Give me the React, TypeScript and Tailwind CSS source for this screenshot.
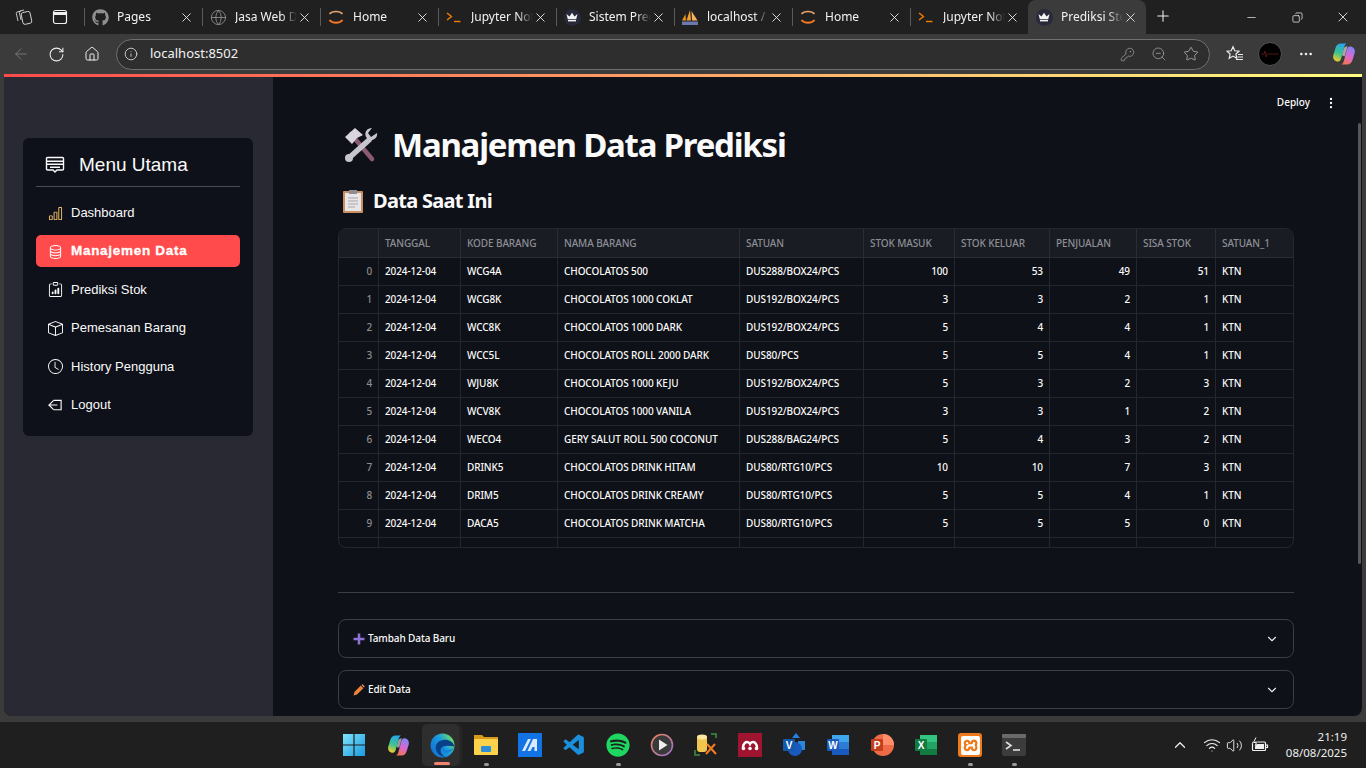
import { ArrowLeft, ChevronDown, ChevronUp, Copy, EllipsisVertical, Info, KeyRound, Minus, MoreHorizontal, Plus, RotateCw, Home, Star, X, ZoomOut, Globe, Wifi, Volume2 } from "lucide-react";
import { BsBarChart, BsBox, BsClipboardData, BsClock, BsDatabase } from "react-icons/bs";
import { FaGithub, FaSpotify } from "react-icons/fa";
import { VscVscode } from "react-icons/vsc";
import { SiXampp } from "react-icons/si";

const columns = ["TANGGAL", "KODE BARANG", "NAMA BARANG", "SATUAN", "STOK MASUK", "STOK KELUAR", "PENJUALAN", "SISA STOK", "SATUAN_1"];

const rows = [
  ["WCG4A", "CHOCOLATOS 500", "DUS288/BOX24/PCS", 100, 53, 49, 51],
  ["WCG8K", "CHOCOLATOS 1000 COKLAT", "DUS192/BOX24/PCS", 3, 3, 2, 1],
  ["WCC8K", "CHOCOLATOS 1000 DARK", "DUS192/BOX24/PCS", 5, 4, 4, 1],
  ["WCC5L", "CHOCOLATOS ROLL 2000 DARK", "DUS80/PCS", 5, 5, 4, 1],
  ["WJU8K", "CHOCOLATOS 1000 KEJU", "DUS192/BOX24/PCS", 5, 3, 2, 3],
  ["WCV8K", "CHOCOLATOS 1000 VANILA", "DUS192/BOX24/PCS", 3, 3, 1, 2],
  ["WECO4", "GERY SALUT ROLL 500 COCONUT", "DUS288/BAG24/PCS", 5, 4, 3, 2],
  ["DRINK5", "CHOCOLATOS DRINK HITAM", "DUS80/RTG10/PCS", 10, 10, 7, 3],
  ["DRIM5", "CHOCOLATOS DRINK CREAMY", "DUS80/RTG10/PCS", 5, 5, 4, 1],
  ["DACA5", "CHOCOLATOS DRINK MATCHA", "DUS80/RTG10/PCS", 5, 5, 5, 0],
];

const gridCols = "grid grid-cols-[40px_82px_97px_182px_124px_91px_95px_87px_79px_77px]";
const cell = "flex h-7 items-center overflow-hidden whitespace-nowrap border-r border-b border-[#24272e] px-[6px]";

function JupyterIcon() {
  return (
    <svg width="16" height="16" viewBox="0 0 16 16" fill="none" strokeWidth="1.5">
      <path d="M1.5 5 C4 1.6 12 1.6 14.5 5" stroke="#e9a36f" />
      <path d="M1.5 11 C4 14.6 12 14.6 14.5 11" stroke="#f37726" strokeWidth="2" />
    </svg>
  );
}

function TerminalIcon() {
  return (
    <svg width="16" height="16" viewBox="0 0 16 16" fill="none" stroke="#f57c00" strokeWidth="1.4">
      <path d="M1 4 L5.5 7.5 L1 11" />
      <path d="M8 12.5 H14.5" />
    </svg>
  );
}

function CrownIcon() {
  return (
    <span className="flex h-[17px] w-[17px] items-center justify-center rounded-full bg-[#28293a]">
      <svg width="12" height="10" viewBox="0 0 12 10" fill="#f4f4f4">
        <path d="M0.5 2 L3.5 4.5 L6 0.8 L8.5 4.5 L11.5 2 L10.2 7.2 H1.8 Z" />
        <rect x="2" y="8" width="8" height="1.4" />
      </svg>
    </span>
  );
}

function SailIcon() {
  return (
    <svg width="18" height="17" viewBox="0 0 18 17">
      <path d="M1 11.5 L4.5 5 L5 11.5 Z" fill="#e8921f" />
      <path d="M5.5 11.5 L9 1 L10 11.5 Z" fill="#f0a030" />
      <path d="M10.5 2 L16.5 11.5 L11 11.5 Z" fill="#f2b25e" />
      <rect x="1" y="12.5" width="16" height="3.5" fill="#6c78af" />
    </svg>
  );
}

function CopilotIcon({ size }: { size: number }) {
  return (
    <svg width={size} height={size} viewBox="0 0 24 24">
      <defs>
        <linearGradient id={`cpa${size}`} x1="0.6" y1="0" x2="0.3" y2="1">
          <stop offset="0" stopColor="#27a5ee" />
          <stop offset="0.55" stopColor="#3bc48b" />
          <stop offset="1" stopColor="#f7ce2a" />
        </linearGradient>
        <linearGradient id={`cpb${size}`} x1="0.7" y1="0" x2="0.3" y2="1">
          <stop offset="0" stopColor="#7f86f4" />
          <stop offset="0.5" stopColor="#d768d6" />
          <stop offset="1" stopColor="#f5744f" />
        </linearGradient>
      </defs>
      <path d="M9 1.5 H14.5 C13 2.5 12.5 3.8 12 5.5 L9.5 15 C9 17.5 8 19.5 6 19.5 C3 19.5 0.6 17 1.2 13.5 L3.5 6 C4.4 3.2 6 1.5 9 1.5 Z" fill={`url(#cpa${size})`} />
      <path d="M15 22.5 H9.5 C11 21.5 11.5 20.2 12 18.5 L14.5 9 C15 6.5 16 4.5 18 4.5 C21 4.5 23.4 7 22.8 10.5 L20.5 18 C19.6 20.8 18 22.5 15 22.5 Z" fill={`url(#cpb${size})`} />
      <path d="M12 6 C13 5 14.5 4 15.5 4.5 C15 5.5 14.7 7.5 14.2 9 L12.8 14 C12 14.5 10.5 14 10 13 Z" fill="#fff" fillOpacity="0.55" />
    </svg>
  );
}

function EdgeIcon({ size }: { size: number }) {
  return (
    <svg width={size} height={size} viewBox="0 0 24 24">
      <defs>
        <linearGradient id={`edge${size}`} x1="0.1" y1="0.7" x2="0.9" y2="0.2">
          <stop offset="0" stopColor="#1478d0" />
          <stop offset="0.55" stopColor="#1b9de0" />
          <stop offset="1" stopColor="#6bdc66" />
        </linearGradient>
      </defs>
      <circle cx="12" cy="12" r="11.5" fill={`url(#edge${size})`} />
      <path d="M23.4 13 C22.5 8.5 18.5 6.5 14.5 6.5 C9 6.5 5.5 10 5.5 14 C5.5 18.5 9.5 23 15 23 C11 21 9.5 18 10.5 15 C11.5 12.5 16 11.5 23.4 13 Z" fill="#0a3f88" />
      <path d="M11.5 15.5 C11.5 18 14.5 19.5 17 19 C19.5 18.5 22 16.5 23 14 C20 16.5 16 17 14 15.5 C13 14.8 13 13.5 14 13 C12.5 13 11.5 14 11.5 15.5 Z" fill="#1282d8" />
    </svg>
  );
}

function OfficeIcon({ letter, dark, mid, light }: { letter: string; dark: string; mid: string; light: string }) {
  return (
    <svg width="24" height="24" viewBox="0 0 24 24">
      <rect x="6" y="2" width="17" height="7" fill={light} />
      <rect x="6" y="9" width="17" height="7" fill={mid} />
      <rect x="6" y="16" width="17" height="6" fill={dark} />
      <rect x="1" y="6" width="12" height="12" rx="1" fill={dark} />
      <text x="7" y="15.5" textAnchor="middle" fontSize="10" fontWeight="700" fill="#fff" fontFamily="Liberation Sans, sans-serif">{letter}</text>
    </svg>
  );
}

const taskbarIcons = [
  {
    dot: false,
    node: (
      <svg width="24" height="24" viewBox="0 0 24 24">
        <defs>
          <linearGradient id="win" x1="0" y1="0" x2="1" y2="1">
            <stop offset="0" stopColor="#7fe3fb" />
            <stop offset="1" stopColor="#1a9be0" />
          </linearGradient>
        </defs>
        <path d="M1 1 H11.4 V11.4 H1 Z M12.6 1 H23 V11.4 H12.6 Z M1 12.6 H11.4 V23 H1 Z M12.6 12.6 H23 V23 H12.6 Z" fill="url(#win)" />
      </svg>
    ),
  },
  { dot: false, node: <CopilotIcon size={23} /> },
  { dot: false, active: true, node: <EdgeIcon size={25} /> },
  {
    dot: true,
    node: (
      <svg width="26" height="24" viewBox="0 0 26 24">
        <path d="M1 2 H9 L11 4 H25 V9 H1 Z" fill="#d69a1c" />
        <rect x="1" y="6" width="24" height="16" rx="1" fill="#fcd24d" />
        <rect x="8" y="13" width="10" height="6" rx="1" fill="#2b8fd8" />
      </svg>
    ),
  },
  {
    dot: false,
    node: (
      <svg width="24" height="24" viewBox="0 0 24 24">
        <rect width="24" height="24" fill="#1173e6" />
        <path d="M4 18 L10 6 H13 L7 18 Z M9.5 18 L15 6 H19 V18 H16.5 V14 H14.5 L12.5 18 Z" fill="#dbeafe" />
      </svg>
    ),
  },
  { dot: false, node: <VscVscode size={25} color="#1a8fdc" /> },
  { dot: true, node: <FaSpotify size={24} color="#1ed760" /> },
  {
    dot: false,
    node: (
      <svg width="24" height="24" viewBox="0 0 24 24">
        <defs>
          <linearGradient id="play" x1="0" y1="0" x2="1" y2="1">
            <stop offset="0" stopColor="#e7845a" />
            <stop offset="1" stopColor="#9a6fd0" />
          </linearGradient>
        </defs>
        <circle cx="12" cy="12" r="10.5" fill="#3a3a3a" stroke="url(#play)" strokeWidth="1.6" />
        <path d="M9 6.5 L17.5 12 L9 17.5 Z" fill="#eee" />
      </svg>
    ),
  },
  {
    dot: false,
    node: (
      <svg width="24" height="24" viewBox="0 0 24 24">
        <path d="M1 17 V22 H6 M17 1 H22 V5" fill="none" stroke="#3f9142" strokeWidth="1.5" />
        <rect x="3" y="2" width="10" height="17" rx="3" fill="#f0c64c" />
        <ellipse cx="8" cy="4" rx="5" ry="2.5" fill="#fbe6a2" />
        <path d="M12 21 L21 11 M13 11 L22 21" stroke="#f57c1f" strokeWidth="2" />
      </svg>
    ),
  },
  {
    dot: false,
    node: (
      <svg width="24" height="24" viewBox="0 0 24 24">
        <rect width="24" height="24" fill="#9f1530" />
        <path d="M5 15 C5 10 8 9 9 9 C10.5 9 11.5 10 12 11 C12.5 10 13.5 9 15 9 C16 9 19 10 19 15" fill="none" stroke="#fff" strokeWidth="2.4" />
        <circle cx="5.5" cy="15.5" r="1.8" fill="#fff" />
        <circle cx="12" cy="15.5" r="1.8" fill="#fff" />
        <circle cx="18.5" cy="15.5" r="1.8" fill="#fff" />
      </svg>
    ),
  },
  {
    dot: false,
    node: (
      <svg width="24" height="24" viewBox="0 0 24 24">
        <path d="M14 0 L18 5 H10 Z" fill="#2a7de1" />
        <rect x="16" y="8" width="7" height="9" fill="#2b88d8" />
        <circle cx="13" cy="16" r="7" fill="#185abd" />
        <rect x="1" y="6" width="12" height="12" rx="1" fill="#125aac" />
        <text x="7" y="15.5" textAnchor="middle" fontSize="10" fontWeight="700" fill="#fff" fontFamily="Liberation Sans, sans-serif">V</text>
      </svg>
    ),
  },
  { dot: false, node: <OfficeIcon letter="W" dark="#185abd" mid="#2b7cd3" light="#41a5ee" /> },
  {
    dot: false,
    node: (
      <svg width="24" height="24" viewBox="0 0 24 24">
        <circle cx="13" cy="12" r="11" fill="#ed6c47" />
        <path d="M13 1 A11 11 0 0 1 24 12 H13 Z" fill="#ff8f6b" />
        <rect x="1" y="6" width="12" height="12" rx="1" fill="#c43e1c" />
        <text x="7" y="15.5" textAnchor="middle" fontSize="10" fontWeight="700" fill="#fff" fontFamily="Liberation Sans, sans-serif">P</text>
      </svg>
    ),
  },
  { dot: false, node: <OfficeIcon letter="X" dark="#107c41" mid="#21a366" light="#33c481" /> },
  {
    dot: true,
    node: (
      <span className="flex h-6 w-6 items-center justify-center rounded-[3px] bg-[#ee7a1b]">
        <SiXampp size={19} color="#fff" />
      </span>
    ),
  },
  {
    dot: true,
    node: (
      <svg width="24" height="24" viewBox="0 0 24 24">
        <rect y="1" width="24" height="22" rx="2" fill="#3c3c3c" />
        <rect y="1" width="24" height="4" rx="1" fill="#6a6a6a" />
        <path d="M4 9 L9 12.5 L4 16" fill="none" stroke="#ddd" strokeWidth="1.6" />
        <path d="M11 17 H18" stroke="#ddd" strokeWidth="1.6" />
      </svg>
    ),
  },
];

function Tab({ icon, title, active }: { icon: React.ReactNode; title: string; active?: boolean }) {
  return (
    <div className={`relative flex h-[34px] w-[118px] shrink-0 items-center pl-[7px] pr-[8px] ${active ? "rounded-t-lg bg-[#3b3b3b]" : ""}`}>
      {!active && <span className="absolute left-0 top-[8px] h-[18px] w-px bg-[#5a5a5a]" />}
      <span className="flex w-[18px] shrink-0 justify-center">{icon}</span>
      <span className="ml-[8px] w-[62px] overflow-hidden whitespace-nowrap text-[12px] text-[#f2f2f2] [mask-image:linear-gradient(90deg,#000_75%,transparent_100%)]">{title}</span>
      <X size={15} strokeWidth={1.4} className="ml-auto text-[#f0f0f0]" />
    </div>
  );
}

function LogoutIcon() {
  return (
    <svg width="16" height="16" viewBox="0 0 16 16" fill="none" stroke="currentColor" strokeWidth="1.2">
      <path d="M6 3 H14 V13 H6" />
      <path d="M6 3 L1 8 H10 M1 8 L6 13" />
    </svg>
  );
}

const menu = [
  { label: "Dashboard", icon: <BsBarChart size={15} color="#f5c46b" /> },
  { label: "Manajemen Data", icon: <BsDatabase size={15} />, active: true },
  { label: "Prediksi Stok", icon: <BsClipboardData size={15} /> },
  { label: "Pemesanan Barang", icon: <BsBox size={15} /> },
  { label: "History Pengguna", icon: <BsClock size={15} /> },
  { label: "Logout", icon: <LogoutIcon /> },
];

function Expander({ icon, label }: { icon: React.ReactNode; label: string }) {
  return (
    <div className="flex h-[39px] items-center justify-between rounded-lg border border-[#3b3e45] pl-[14px] pr-[14px]">
      <div className="flex items-center gap-[3px] text-[10px] font-medium tracking-[-0.1px] text-[#fafafa]">
        {icon}
        <span>{label}</span>
      </div>
      <ChevronDown size={14} strokeWidth={2} className="text-[#e8e8e8]" />
    </div>
  );
}

export default function App() {
  return (
    <div className="flex h-[768px] w-[1366px] flex-col overflow-hidden bg-[#3b3b3b] font-['Noto_Sans',sans-serif]">
      <div className="flex h-[34px] shrink-0 bg-[#202020]">
        <div className="flex w-[84px] shrink-0 items-center gap-[19px] pl-[15px]">
          <svg width="18" height="18" viewBox="0 0 18 18" fill="none" stroke="#d8d8d8" strokeWidth="0.9">
            <path d="M6 3 L2 4 C1.4 4.2 1.2 4.8 1.3 5.3 L3 13" />
            <path d="M9 2 L5 3 C4.4 3.2 4.2 3.8 4.3 4.3 L6 12" />
            <rect x="7" y="4" width="9" height="12" rx="2" transform="rotate(-12 11 10)" />
          </svg>
          <svg width="16" height="16" viewBox="0 0 16 16" fill="none" stroke="#f0f0f0" strokeWidth="1.2">
            <rect x="1.5" y="1.5" width="13" height="13" rx="2" />
            <path d="M1.5 4.5 H14.5" strokeWidth="3" />
          </svg>
        </div>
        <Tab icon={<FaGithub size={17} color="#8f8f8f" />} title="Pages" />
        <Tab icon={<Globe size={17} strokeWidth={1.1} color="#9a9a9a" />} title="Jasa Web Desain" />
        <Tab icon={<JupyterIcon />} title="Home" />
        <Tab icon={<TerminalIcon />} title="Jupyter Notebook" />
        <Tab icon={<CrownIcon />} title="Sistem Prediksi" />
        <Tab icon={<SailIcon />} title="localhost / phpMy" />
        <Tab icon={<JupyterIcon />} title="Home" />
        <Tab icon={<TerminalIcon />} title="Jupyter Notebook" />
        <Tab icon={<CrownIcon />} title="Prediksi Stok" active />
        <Plus size={18} strokeWidth={1.4} className="ml-[8px] mt-[7px] text-[#f0f0f0]" />
        <div className="ml-auto flex items-center">
          <span className="flex w-[46px] justify-center"><Minus size={13} strokeWidth={1.3} className="text-[#f0f0f0]" /></span>
          <span className="flex w-[46px] justify-center"><Copy size={11} strokeWidth={1.6} className="-scale-x-100 text-[#f0f0f0]" /></span>
          <span className="flex w-[46px] justify-center"><X size={16} strokeWidth={1.3} className="text-[#f0f0f0]" /></span>
        </div>
      </div>

      <div className="flex h-[40px] shrink-0 items-center">
        <span className="flex w-[40px] justify-center pl-[1px]"><ArrowLeft size={18} strokeWidth={1.2} className="text-[#7b7b7b]" /></span>
        <span className="flex w-[32px] justify-center"><RotateCw size={17} strokeWidth={1.5} className="text-[#ececec]" /></span>
        <span className="flex w-[40px] justify-center"><Home size={16} strokeWidth={1.5} className="text-[#ececec]" /></span>
        <div className="ml-[4px] flex h-[31px] w-[1094px] items-center rounded-full border border-[#707070] bg-[#2e2e2e] pl-[7px] pr-[10px]">
          <Info size={14} strokeWidth={1.4} className="text-[#e0e0e0]" />
          <span className="ml-[12px] text-[13px] text-[#f2f2f2]">localhost:8502</span>
          <div className="ml-auto flex items-center gap-[16px]">
            <KeyRound size={15} strokeWidth={1.2} className="text-[#a0a0a0]" />
            <ZoomOut size={16} strokeWidth={1.2} className="text-[#a0a0a0]" />
            <Star size={16} strokeWidth={1.2} className="text-[#b5b5b5]" />
          </div>
        </div>
        <svg width="18" height="18" viewBox="0 0 18 18" fill="none" stroke="#ececec" strokeWidth="1.2" className="ml-[16px]">
          <path d="M7 1.8 L8.8 5.8 L13 6.2 L9.9 9 L10.8 13.3 L7 11.1 L3.2 13.3 L4.1 9 L1 6.2 L5.2 5.8 Z" />
          <path d="M12 9.5 H17 M11.5 12 H17 M10 14.5 H17" />
        </svg>
        <span className="ml-[14px] flex h-[24px] w-[24px] items-center justify-center rounded-full border border-[#555] bg-black">
          <svg width="18" height="8" viewBox="0 0 18 8" fill="none" stroke="#6a1616" strokeWidth="0.8">
            <path d="M0 4 H3 L4 1 L5 7 L6 4 H18" />
          </svg>
        </span>
        <MoreHorizontal size={16} className="ml-[16px] text-[#ececec]" />
        <span className="ml-[18px]"><CopilotIcon size={24} /></span>
      </div>

      <div className="relative mx-[4px] flex h-[642px] shrink-0 flex-col overflow-hidden rounded-b-lg bg-[#0e1117]">
        <div className="h-[3px] shrink-0 bg-[linear-gradient(90deg,#ff4b4b,#fffd80)]" />
        <div className="flex min-h-0 flex-1">
          <aside className="w-[269px] shrink-0 bg-[#282932] pl-[19px] pt-[61px]">
            <div className="h-[298px] w-[230px] rounded-md bg-[#0e1119] px-[13px] pt-[11px] font-['Liberation_Sans',sans-serif] text-[#fafafa]">
              <div className="flex h-[38px] items-center gap-[14px] border-b border-[#4a4c52] pb-[5px] pl-[9px]">
                <svg width="20" height="20" viewBox="0 0 20 20" fill="none" stroke="currentColor" strokeWidth="1.4">
                  <path d="M2.5 2.5 H17.5 C18.2 2.5 18.5 3 18.5 3.5 V14 C18.5 14.6 18 15 17.5 15 H12 L10 17 L8 15 H2.5 C2 15 1.5 14.6 1.5 14 V3.5 C1.5 3 1.8 2.5 2.5 2.5 Z" />
                  <path d="M1.5 6.2 H18.5 M1.5 9.2 H18.5 M5 12.2 H15" />
                </svg>
                <span className="text-[19px]">Menu Utama</span>
              </div>
              <div className="mt-[10px] flex flex-col gap-[6.4px]">
                {menu.map((item) => (
                  <div key={item.label} className={`flex h-[32px] items-center gap-[8px] rounded-[5px] pl-[12px] ${item.active ? "bg-[#ff4b4b] text-[13.5px] font-bold tracking-[0.7px] text-white [-webkit-text-stroke:0.3px_white]" : "text-[13px]"}`}>
                    <span className="flex w-[15px] justify-center">{item.icon}</span>
                    <span>{item.label}</span>
                  </div>
                ))}
              </div>
            </div>
          </aside>

          <main className="relative min-w-0 flex-1 pl-[65px] pr-[68px] pt-[46px]">
            <div className="absolute right-[24px] top-[18px] flex items-center gap-[14px] text-[#fafafa]">
              <span className="text-[10px] font-medium">Deploy</span>
              <EllipsisVertical size={14} />
            </div>
            <span className="absolute right-[1px] top-[46px] h-[441px] w-[3px] rounded-full bg-[#55575c]" />

            <div className="flex h-[44px] items-center gap-[12px]">
              <svg width="38" height="38" viewBox="0 0 38 38" className="ml-[4px] shrink-0">
                <path d="M9 8 L30 33" stroke="#8a5a74" strokeWidth="4.5" strokeLinecap="round" />
                <path d="M3 11 L13 2 L21 9 L15 12 L10 18 Z" fill="#d9d5de" />
                <path d="M27 14 L8 31" stroke="#c7c5cc" strokeWidth="5.5" strokeLinecap="round" />
                <path d="M35 7 L29 11 L26 7 L30 2 C25 2 22 6 24 11 L27 14 C31 15 36 12 35 7 Z" fill="#c7c5cc" />
                <circle cx="7" cy="32" r="4" fill="#c7c5cc" />
              </svg>
              <h1 className="whitespace-nowrap text-[33px] font-bold tracking-[-1.24px] text-[#fafafa]">Manajemen Data Prediksi</h1>
            </div>

            <div className="mt-[18px] flex h-[32px] items-center gap-[8px]">
              <svg width="24" height="24" viewBox="0 0 24 24" className="ml-[3px] shrink-0">
                <rect x="2" y="2" width="20" height="22" rx="1" fill="#c98e62" />
                <rect x="4" y="4" width="16" height="18" fill="#e8e6e6" />
                <path d="M7 9 H17 M7 12 H17 M7 15 H17 M7 18 H14" stroke="#a5a5ad" strokeWidth="1" />
                <rect x="8" y="1" width="8" height="4" fill="#8d8d93" />
              </svg>
              <h2 className="whitespace-nowrap text-[20px] font-bold tracking-[-0.7px] text-[#fafafa]">Data Saat Ini</h2>
            </div>

            <div className="mt-[11px] h-[320px] overflow-hidden rounded-lg border border-[#24272e] text-[10px] font-medium tracking-[-0.1px]">
              <div className={`${gridCols} bg-[#1a1c24] text-[#8c8e94]`}>
                <div className="flex h-[29px] items-center border-r border-b border-[#2a2d34]" />
                {columns.map((col) => (
                  <div key={col} className="flex h-[29px] items-center overflow-hidden whitespace-nowrap border-r border-b border-[#2a2d34] px-[6px] last:border-r-0">{col}</div>
                ))}
              </div>
              {rows.map((r, i) => (
                <div key={r[0]} className={`${gridCols} text-[#fafafa]`}>
                  <div className={`${cell} justify-end text-[#8c8e94]`}>{i}</div>
                  <div className={cell}>2024-12-04</div>
                  <div className={cell}>{r[0]}</div>
                  <div className={cell}>{r[1]}</div>
                  <div className={cell}>{r[2]}</div>
                  <div className={`${cell} justify-end`}>{r[3]}</div>
                  <div className={`${cell} justify-end`}>{r[4]}</div>
                  <div className={`${cell} justify-end`}>{r[5]}</div>
                  <div className={`${cell} justify-end`}>{r[6]}</div>
                  <div className={`${cell} border-r-0`}>KTN</div>
                </div>
              ))}
              <div className={gridCols}>
                {Array.from({ length: 10 }).map((_, i) => (
                  <div key={i} className="h-7 border-r border-[#24272e] last:border-r-0" />
                ))}
              </div>
            </div>

            <div className="mt-[44px] border-t border-[#3b3e45]" />

            <div className="mt-[26px] flex flex-col gap-[12px]">
              <Expander
                label="Tambah Data Baru"
                icon={
                  <svg width="12" height="12" viewBox="0 0 12 12">
                    <path d="M6 0.5 V11.5 M0.5 6 H11.5" stroke="#8d72d6" strokeWidth="2.6" />
                  </svg>
                }
              />
              <Expander
                label="Edit Data"
                icon={
                  <svg width="12" height="12" viewBox="0 0 12 12">
                    <path d="M0.6 11.4 L1.4 8 L7.8 1.6 L10.4 4.2 L4 10.6 Z" fill="#f0803c" />
                    <path d="M8.5 1 L9.5 0.3 L11.7 2.5 L11 3.5 Z" fill="#f7a07c" />
                  </svg>
                }
              />
            </div>
          </main>
        </div>
      </div>

      <div className="mt-[6px] flex h-[46px] shrink-0 items-center bg-[#1f1f1f] pl-[332px]">
        {taskbarIcons.map((icon, i) => (
          <div key={i} className="relative flex h-[42px] w-[44px] items-center justify-center">
            {icon.active && <span className="absolute left-[2px] top-0 h-[42px] w-[37px] rounded-[5px] bg-[#2e2e2e] shadow-[3px_0_0_#262626]" />}
            <span className="relative flex">{icon.node}</span>
            {icon.dot && <span className="absolute bottom-0 h-[3px] w-[5px] rounded-full bg-[#9a9a9a]" />}
            {icon.active && <span className="absolute bottom-[1px] h-[3px] w-4 rounded-full bg-[#f0826e]" />}
          </div>
        ))}
        <div className="ml-auto flex items-center pr-[19px]">
          <ChevronUp size={18} strokeWidth={1.6} className="mr-[14px] text-[#f0f0f0]" />
          <Wifi size={18} strokeWidth={1.5} className="mr-[5px] text-[#f0f0f0]" />
          <Volume2 size={17} strokeWidth={1.3} className="mr-[8px] text-[#f0f0f0]" />
          <svg width="18" height="16" viewBox="0 0 18 16" className="mr-[17px]" fill="none" stroke="#f0f0f0" strokeWidth="1.2">
            <rect x="1.5" y="5" width="13" height="8.5" rx="1" />
            <rect x="4" y="7" width="9" height="5" fill="#f0f0f0" stroke="none" />
            <path d="M15 8 H16.5 V10.5 H15" />
            <path d="M5 0.5 L2.5 5.5 H5.5 L4 9" strokeWidth="1.3" stroke="#1f1f1f" />
            <path d="M5 0.5 L2.5 5.5 H5.5 L4 9" strokeWidth="1" />
          </svg>
          <div className="text-right text-[11.5px] leading-[16px] text-[#efefef]">
            <div>21:19</div>
            <div>08/08/2025</div>
          </div>
        </div>
      </div>
    </div>
  );
}
